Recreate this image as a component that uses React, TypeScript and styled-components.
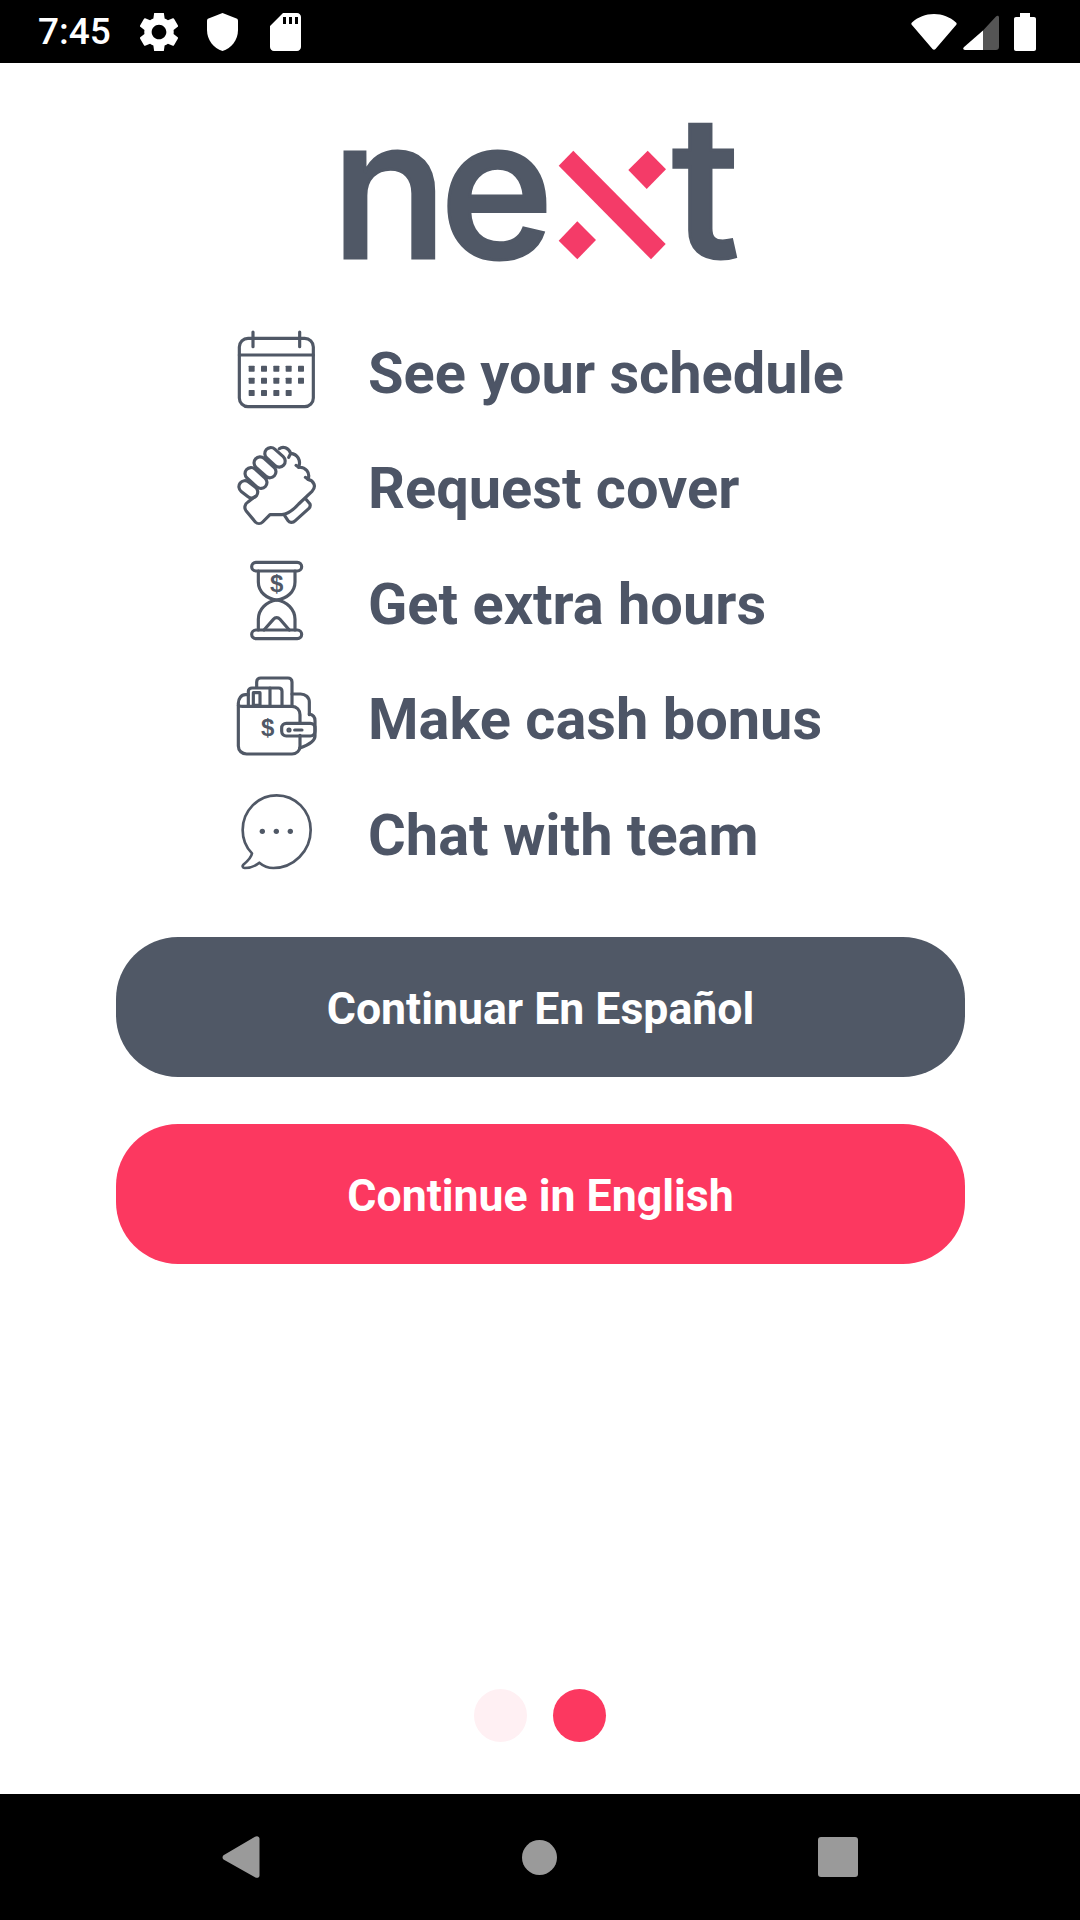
import React from 'react';
import styled, { createGlobalStyle } from 'styled-components';

const GlobalStyle = createGlobalStyle`
  html, body {
    margin: 0;
    padding: 0;
    background: #fff;
    font-family: Roboto, "Liberation Sans", sans-serif;
  }
`;

const Screen = styled.div`
  width: 1080px;
  height: 1920px;
  display: flex;
  flex-direction: column;
  overflow: hidden;
  background: #fff;
`;

const StatusBar = styled.div`
  height: 63px;
  flex-shrink: 0;
  background: #000;
  display: flex;
  align-items: center;
  padding: 0 44px 0 38px;
  color: #fff;
`;

const Clock = styled.span`
  font-size: 37px;
  font-weight: 500;
  margin-right: 31px;
  width: 71px;
  white-space: nowrap;
`;

const StatusIcon = styled.svg<{ $gap?: number }>`
  display: block;
  flex-shrink: 0;
  margin-right: ${p => p.$gap ?? 0}px;
  fill: #fff;
`;

const Spacer = styled.div`
  flex: 1;
`;

const Main = styled.main`
  flex: 1;
  display: flex;
  flex-direction: column;
`;

const Logo = styled.svg`
  display: block;
  width: 440px;
  height: 247px;
  margin: 0 auto;
`;

const LogoText = styled.text<{ $size?: number }>`
  font-family: Inter, "Liberation Sans", sans-serif;
  font-weight: 500;
  font-size: ${p => p.$size ?? 194}px;
  letter-spacing: -8px;
  fill: #505866;
  stroke: #505866;
  stroke-width: 3px;
`;

const FeatureList = styled.ul`
  list-style: none;
  margin: 4px 0 45px;
  padding: 0 0 0 220px;
`;

const FeatureRow = styled.li`
  height: 115.5px;
  display: flex;
  align-items: center;
`;

const FeatureIcon = styled.svg<{ $thin?: boolean }>`
  display: block;
  width: 110px;
  height: 110px;
  margin-right: 38px;
  flex-shrink: 0;
  fill: none;
  stroke: #505866;
  stroke-width: ${p => (p.$thin ? 8 : 9.5)};
  stroke-linecap: round;
  stroke-linejoin: round;
`;

const FeatureText = styled.span`
  font-size: 57.75px;
  font-weight: 700;
  color: #4d5566;
  white-space: nowrap;
  padding-top: 2px;
`;

const Buttons = styled.div`
  display: flex;
  flex-direction: column;
  gap: 47px;
  padding: 0 115px 0 116px;
`;

const LangButton = styled.button<{ $primary?: boolean }>`
  height: 140px;
  border: none;
  border-radius: 62px;
  background: ${p => (p.$primary ? '#fc3860' : '#505866')};
  color: #fff;
  font-family: Roboto, "Liberation Sans", sans-serif;
  font-size: 44.6px;
  font-weight: 700;
  padding: 5px 0 0;
`;

const Pager = styled.div`
  margin-top: auto;
  margin-bottom: 52px;
  display: flex;
  justify-content: center;
  gap: 26px;
`;

const PagerDot = styled.div<{ $active?: boolean }>`
  width: 53px;
  height: 53px;
  border-radius: 50%;
  background: ${p => (p.$active ? '#fc3860' : '#fff0f3')};
`;

const NavBar = styled.div`
  height: 126px;
  flex-shrink: 0;
  background: #000;
  display: flex;
  align-items: center;
  padding-left: 222px;
`;

const NavIcon = styled.svg<{ $gap?: number }>`
  display: block;
  flex-shrink: 0;
  fill: #9a9a9a;
  margin-right: ${p => p.$gap ?? 0}px;
`;

const DollarMark = styled.text`
  font-family: "Liberation Sans", sans-serif;
  font-weight: 700;
  font-size: 72px;
  fill: #505866;
  stroke: none;
  text-anchor: middle;
`;

const CalendarIcon = () => (
  <FeatureIcon viewBox="0 -9 330 330">
    <rect x="58" y="55" width="222" height="205" rx="26" />
    <path d="M58 105H280M99 36V80M239 36V80" />
    {[146, 182, 219].map((y, row) =>
      [95, 132, 169, 206, 243].slice(0, row === 2 ? 4 : 5).map(x => (
        <rect key={`${x}-${y}`} x={x - 9} y={y - 9} width="18" height="18" rx="2" fill="#505866" stroke="none" />
      ))
    )}
  </FeatureIcon>
);

const HandsIcon = () => (
  <FeatureIcon viewBox="0 -8 330 330">
    <rect x="54" y="146" width="62" height="36" rx="18" transform="rotate(38 85 164)" />
    <rect x="70" y="112" width="76" height="36" rx="18" transform="rotate(42 108 130)" />
    <rect x="97" y="80" width="76" height="36" rx="18" transform="rotate(42 135 98)" />
    <rect x="130" y="50" width="70" height="36" rx="18" transform="rotate(42 165 68)" />
    <path d="M178 42C188 34 206 38 212 56C232 58 244 76 236 98C256 96 272 114 264 134C282 138 290 156 276 170L236 208C220 226 204 238 186 240H150L128 262C122 268 112 268 106 262L78 228C72 220 74 208 84 202L104 186" />
    <path d="M212 56L206 68M236 98L228 92M264 134L256 128" />
    <path d="M258 194L270 208C272 214 270 218 266 222L226 258C218 266 208 264 204 258L192 240" />
  </FeatureIcon>
);

const HourglassIcon = () => (
  <FeatureIcon viewBox="0 -6 330 330">
    <rect x="95" y="37" width="150" height="26" rx="13" />
    <rect x="95" y="240" width="150" height="26" rx="13" />
    <path d="M115 63V96C115 126 140 146 170 150C200 146 225 126 225 96V63" />
    <path d="M115 240V208C115 178 140 154 170 150C200 154 225 178 225 208V240" />
    <path d="M132 240L160 208C166 201 174 201 180 208L208 240" />
    <DollarMark x="170" y="126">$</DollarMark>
  </FeatureIcon>
);

const WalletIcon = () => (
  <FeatureIcon viewBox="0 -5 330 330">
    <path d="M110 68V52C110 44 116 40 122 40H204C210 40 216 44 216 52V125" />
    <path d="M85 122V80C85 74 90 70 96 70H176C182 70 186 74 186 80V125" />
    <path d="M150 70V125" />
    <path d="M100 84H120V122H100Z" />
    <path d="M85 90H76C64 90 55 102 55 116V244C55 258 66 268 80 268H216C230 268 240 258 240 244V212" />
    <path d="M55 122C55 124 60 125 68 125H216C230 125 240 136 240 150V176" />
    <path d="M216 88H242C256 88 268 98 268 112V150" />
    <path d="M268 148C278 150 285 158 285 168V214C285 228 268 240 240 250" />
    <rect x="185" y="176" width="100" height="38" rx="14" />
    <path d="M224 196H246" />
    <circle cx="207" cy="196" r="3" fill="#505866" />
    <DollarMark x="143" y="214">$</DollarMark>
  </FeatureIcon>
);

const ChatIcon = () => (
  <FeatureIcon viewBox="0 -3 330 330" $thin>
    <path d="M96 220C76 200 68 176 68 150C68 92 114 46 170 46C226 46 272 92 272 150C272 214 220 264 160 264C144 264 130 258 118 248C106 258 90 264 74 264C68 264 66 258 70 254C82 244 94 234 96 220Z" />
    {[127, 169, 211].map(x => (
      <circle key={x} cx={x} cy="154" r="8" fill="#505866" stroke="none" />
    ))}
  </FeatureIcon>
);

const features = [
  { label: 'See your schedule', icon: <CalendarIcon /> },
  { label: 'Request cover', icon: <HandsIcon /> },
  { label: 'Get extra hours', icon: <HourglassIcon /> },
  { label: 'Make cash bonus', icon: <WalletIcon /> },
  { label: 'Chat with team', icon: <ChatIcon /> },
];

const App: React.FC = () => (
  <>
    <GlobalStyle />
    <Screen>
      <StatusBar>
        <Clock>7:45</Clock>
        {/* settings */}
        <StatusIcon width="38" height="38" viewBox="2.7 2.7 18.6 18.6" $gap={29}>
          <path d="M19.14 12.94c.04-.3.06-.61.06-.94 0-.32-.02-.64-.07-.94l2.03-1.58a.49.49 0 0 0 .12-.61l-1.92-3.32a.488.488 0 0 0-.59-.22l-2.39.96c-.5-.38-1.03-.7-1.62-.94l-.36-2.54a.484.484 0 0 0-.48-.41h-3.84c-.24 0-.43.17-.47.41l-.36 2.54c-.59.24-1.13.57-1.62.94l-2.39-.96c-.22-.08-.47 0-.59.22L2.74 8.87c-.12.21-.08.47.12.61l2.03 1.58c-.05.3-.09.63-.09.94s.02.64.07.94l-2.03 1.58a.49.49 0 0 0-.12.61l1.92 3.32c.12.22.37.29.59.22l2.39-.96c.5.38 1.03.7 1.62.94l.36 2.54c.05.24.24.41.48.41h3.84c.24 0 .44-.17.47-.41l.36-2.54c.59-.24 1.13-.56 1.62-.94l2.39.96c.22.08.47 0 .59-.22l1.92-3.32c.12-.22.07-.47-.12-.61l-2.01-1.58zM12 15.6c-1.98 0-3.6-1.62-3.6-3.6s1.62-3.6 3.6-3.6 3.6 1.62 3.6 3.6-1.62 3.6-3.6 3.6z" />
        </StatusIcon>
        {/* shield */}
        <StatusIcon width="31" height="38" viewBox="0 0 31 38" $gap={32}>
          <path d="M15.5 0L1.5 5.5C.6 5.9 0 6.7 0 7.7V17C0 27 6.5 35.2 15.5 38C24.5 35.2 31 27 31 17V7.7C31 6.7 30.4 5.9 29.5 5.5Z" />
        </StatusIcon>
        {/* sd card */}
        <StatusIcon width="31" height="38" viewBox="0 0 31 38">
          <path fillRule="evenodd" d="M13 0H27C29.2 0 31 1.8 31 4V34C31 36.2 29.2 38 27 38H4C1.8 38 0 36.2 0 34V13ZM13 4V11H16V4ZM19 4V11H22V4ZM25 4V11H28V4Z" />
        </StatusIcon>
        <Spacer />
        {/* wifi */}
        <StatusIcon width="46" height="37" viewBox="0 0 46 37" $gap={6}>
          <path d="M1 9.5C7 4 14.5 1 23 1C31.5 1 39 4 45 9.5C45.8 10.2 45.8 11 45.3 11.8L24.5 36C23.7 37 22.3 37 21.5 36L.7 11.8C.2 11 .2 10.2 1 9.5Z" />
        </StatusIcon>
        {/* signal */}
        <StatusIcon width="36" height="36" viewBox="0 0 36 36" $gap={15}>
          <path d="M20 16.5V36H2C.3 36 -.4 34.5 .8 33.3Z" />
          <path fill="#555" d="M20 16.5L33 2.5C34.3 1 36 1.5 36 3.5V33C36 34.8 34.8 36 33 36H20Z" />
        </StatusIcon>
        {/* battery */}
        <StatusIcon width="22" height="38" viewBox="0 0 22 38">
          <path d="M6 0H16V4H20C21.2 4 22 4.8 22 6V36C22 37.2 21.2 38 20 38H2C.8 38 0 37.2 0 36V6C0 4.8 .8 4 2 4H6Z" />
        </StatusIcon>
      </StatusBar>

      <Main>
        <Logo viewBox="0 -37 440 247">
          <LogoText x="11" y="158">ne</LogoText>
          <polygon fill="#f43b68" points="253.3,50.7 345.7,144 331,159.3 238.7,65.7" />
          <polygon fill="#f43b68" points="327.7,50.7 346,69.3 326.7,89 308.3,70" />
          <polygon fill="#f43b68" points="257.3,121.3 276,140 257.3,159.3 238.7,140.7" />
          <LogoText x="352" y="158" $size={198}>t</LogoText>
        </Logo>

        <FeatureList>
          {features.map(f => (
            <FeatureRow key={f.label}>
              {f.icon}
              <FeatureText>{f.label}</FeatureText>
            </FeatureRow>
          ))}
        </FeatureList>

        <Buttons>
          <LangButton>Continuar En Español</LangButton>
          <LangButton $primary>Continue in English</LangButton>
        </Buttons>

        <Pager>
          <PagerDot />
          <PagerDot $active />
        </Pager>
      </Main>

      <NavBar>
        <NavIcon width="38" height="42" viewBox="0 0 38 42" $gap={262}>
          <path d="M1.5 23.5C.2 22.3 .2 20.5 1.5 19.3L33 .8C35 -.6 37.5 .5 37.5 2.5V39.5C37.5 41.5 35 42.6 33 41.2Z" />
        </NavIcon>
        <NavIcon width="35" height="35" viewBox="0 0 35 35" $gap={261}>
          <circle cx="17.5" cy="17.5" r="17.5" />
        </NavIcon>
        <NavIcon width="40" height="40" viewBox="0 0 40 40">
          <rect width="40" height="40" rx="3" />
        </NavIcon>
      </NavBar>
    </Screen>
  </>
);

export default App;
